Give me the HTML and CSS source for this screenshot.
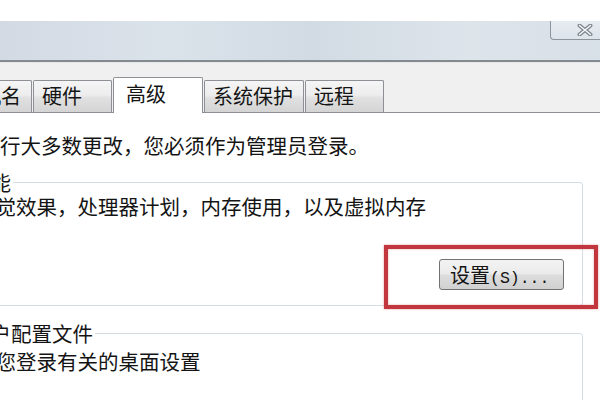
FILE: index.html
```html
<!DOCTYPE html>
<html lang="zh-CN">
<head>
  <meta charset="UTF-8">
  <meta name="viewport" content="width=device-width, initial-scale=1.0">
  <title>系统属性</title>
  <link rel="stylesheet" href="styles.css">
</head>
<body>
  <div class="window">
    <div class="caption">
      <div class="close-btn">
        <svg width="16" height="12" viewBox="0 0 16 12">
          <path d="M2.5 1.5 L13.5 10.5 M13.5 1.5 L2.5 10.5" stroke="#7f868d" stroke-width="4" stroke-linecap="round" fill="none"/>
          <path d="M2.5 1.5 L13.5 10.5 M13.5 1.5 L2.5 10.5" stroke="#f3f5f7" stroke-width="1.6" stroke-linecap="round" fill="none"/>
        </svg>
      </div>
    </div>

    <div class="tabs">
      <div class="tab">计算机名</div>
      <div class="tab">硬件</div>
      <div class="tab selected">高级</div>
      <div class="tab">系统保护</div>
      <div class="tab">远程</div>
    </div>

    <div class="page">
      <p class="note">要进行大多数更改，您必须作为管理员登录。</p>

      <fieldset class="group">
        <legend>性能</legend>
        <p>视觉效果，处理器计划，内存使用，以及虚拟内存</p>
        <div class="actions">
          <span class="mark">
            <button class="btn">设置<span class="mono">(S)...</span></button>
            <span class="highlight"></span>
          </span>
        </div>
      </fieldset>

      <fieldset class="group last">
        <legend>用户配置文件</legend>
        <p>与您登录有关的桌面设置</p>
      </fieldset>
    </div>
  </div>
</body>
</html>
```

FILE: styles.css
```css
html, body {
  margin: 0;
  padding: 0;
}
body {
  width: 600px;
  height: 400px;
  overflow: hidden;
  background-color: #fff;
  color: #141414;
  font-family: "Noto Sans CJK SC", "Liberation Sans", sans-serif;
}
.window {
  padding-top: 21px;
}

/* title bar */
.caption {
  height: 39px;
  display: flex;
  justify-content: flex-end;
  align-items: flex-start;
  background: linear-gradient(to right, #d3dae4, #dae2ea 28%, #d2dbe4 52%, #dde4ea 78%, #d8e0e7);
  border-bottom: 2px solid #858a8f;
}
.close-btn {
  box-sizing: border-box;
  width: 50px;
  height: 19px;
  padding-left: 26px;
  display: flex;
  align-items: center;
  border-left: 1px solid #8d949b;
  border-bottom: 1px solid #8d949b;
  border-bottom-left-radius: 4px;
  background: linear-gradient(#e7ecf1, #dde4ea);
}

/* tab strip */
.tabs {
  display: flex;
  align-items: flex-end;
  gap: 1px;
  margin-left: -68px;
  padding-top: 14px;
  background-color: #f0f0f0;
  border-top: 1px solid #e5e8eb;
  border-bottom: 1px solid #8c8f94;
}
.tab {
  box-sizing: border-box;
  min-width: 79px;
  height: 32px;
  padding: 0 10px 0 8px;
  font-size: 20px;
  line-height: 30px;
  white-space: nowrap;
  border: 1px solid #8d9094;
  border-bottom: none;
  border-radius: 2px 2px 0 0;
  background: linear-gradient(#f5f5f5, #ededed 45%, #e0e0e0 55%, #d4d4d4);
}
.tab.selected {
  height: 36px;
  min-width: 90px;
  padding-left: 12px;
  margin-bottom: -1px;
  line-height: 32px;
  background: #fff;
}

/* page content */
.page {
  margin-left: -41px;
  padding-top: 20px;
  font-size: 20.5px;
  line-height: 24px;
  white-space: nowrap;
}
.page p {
  margin: 0;
}
.group {
  margin: 13px 17px 0 7px;
  padding: 0 8px 15px;
  min-width: 0;
  border: 1px solid #d5dde3;
  border-radius: 3px;
}
.group legend {
  margin-left: -7px;
  padding: 0 2px;
  line-height: 24px;
}
.group.last {
  margin-top: 15px;
  padding-top: 4px;
  padding-bottom: 80px;
}
.actions {
  display: flex;
  justify-content: flex-end;
  padding: 41px 10px 0 0;
}
.mark {
  position: relative;
  display: inline-block;
}
.btn {
  display: block;
  box-sizing: border-box;
  width: 125px;
  height: 31px;
  padding: 0 0 0 10px;
  text-align: left;
  font-family: inherit;
  font-size: 20px;
  color: #141414;
  border: 1px solid #727272;
  border-radius: 3px;
  background: linear-gradient(#f3f3f3, #ebebeb 48%, #dddddd 52%, #d0d0d0);
}
.mono {
  font-family: "Liberation Mono", monospace;
  font-size: 16.5px;
}

/* red annotation box */
.highlight {
  position: absolute;
  top: -14px;
  left: -55px;
  right: -34px;
  bottom: -19px;
  border: 4px solid #c2373d;
  box-shadow: 0 0 2px rgba(194, 55, 61, 0.5), inset 0 0 2px rgba(194, 55, 61, 0.5);
}
```
